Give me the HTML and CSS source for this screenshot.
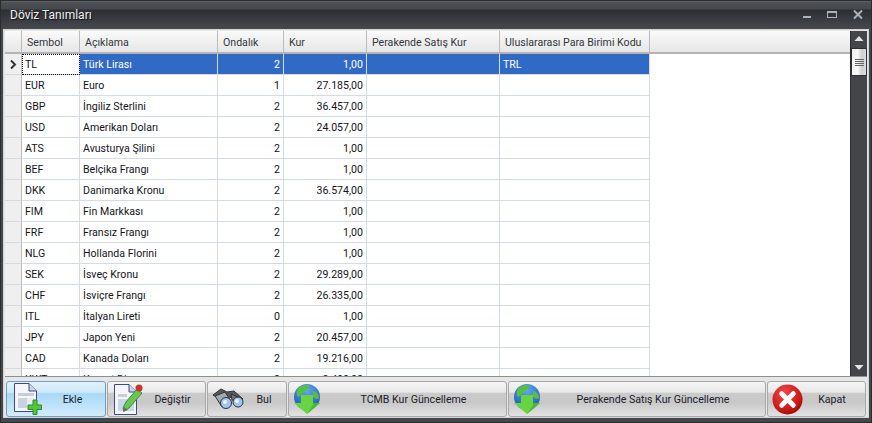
FILE: index.html
```html
<!DOCTYPE html>
<html lang="tr">
<head>
<meta charset="utf-8">
<title>Döviz Tanımları</title>
<link rel="stylesheet" href="styles.css">
</head>
<body>
<div class="window">
  <header class="titlebar">
    <span class="title">Döviz Tanımları</span>
    <div class="winbtns">
      <svg class="wb" width="8" height="10" viewBox="0 0 8 10"><rect x="0" y="6" width="8" height="2" fill="#a9b3bc"/></svg>
      <svg class="wb" width="10" height="10" viewBox="0 0 10 10"><rect x="0.500" y="1.500" width="9" height="6" fill="none" stroke="#a9b3bc"/><rect x="0" y="1" width="10" height="2" fill="#a9b3bc"/></svg>
      <svg class="wb" width="10" height="10" viewBox="0 0 10 10"><path d="M1 0.500 L9 8.500 M9 0.500 L1 8.500" stroke="#a9b3bc" stroke-width="2" fill="none"/></svg>
    </div>
  </header>
  <div class="content">
    <div class="gridwrap">
      <div class="grid">
        <div class="row head">
          <div class="c rh"></div><div class="c sym">Sembol</div><div class="c desc">Açıklama</div><div class="c dec">Ondalık</div><div class="c rate">Kur</div><div class="c ret">Perakende Satış Kur</div><div class="c code">Uluslararası Para Birimi Kodu</div><div class="c fill"></div>
        </div>
        <div class="row selected">
          <div class="c rh"><svg width="7" height="9" viewBox="0 0 7 9"><path d="M1 0.500 L5 4.500 L1 8.500" fill="none" stroke="#333" stroke-width="2"/></svg></div><div class="c sym focus">TL</div><div class="c desc">Türk Lirası</div><div class="c dec num">2</div><div class="c rate num">1,00</div><div class="c ret"></div><div class="c code">TRL</div>
        </div>
        <div class="row"><div class="c rh"></div><div class="c sym">EUR</div><div class="c desc">Euro</div><div class="c dec num">1</div><div class="c rate num">27.185,00</div><div class="c ret"></div><div class="c code"></div></div>
        <div class="row"><div class="c rh"></div><div class="c sym">GBP</div><div class="c desc">İngiliz Sterlini</div><div class="c dec num">2</div><div class="c rate num">36.457,00</div><div class="c ret"></div><div class="c code"></div></div>
        <div class="row"><div class="c rh"></div><div class="c sym">USD</div><div class="c desc">Amerikan Doları</div><div class="c dec num">2</div><div class="c rate num">24.057,00</div><div class="c ret"></div><div class="c code"></div></div>
        <div class="row"><div class="c rh"></div><div class="c sym">ATS</div><div class="c desc">Avusturya Şilini</div><div class="c dec num">2</div><div class="c rate num">1,00</div><div class="c ret"></div><div class="c code"></div></div>
        <div class="row"><div class="c rh"></div><div class="c sym">BEF</div><div class="c desc">Belçika Frangı</div><div class="c dec num">2</div><div class="c rate num">1,00</div><div class="c ret"></div><div class="c code"></div></div>
        <div class="row"><div class="c rh"></div><div class="c sym">DKK</div><div class="c desc">Danimarka Kronu</div><div class="c dec num">2</div><div class="c rate num">36.574,00</div><div class="c ret"></div><div class="c code"></div></div>
        <div class="row"><div class="c rh"></div><div class="c sym">FIM</div><div class="c desc">Fin Markkası</div><div class="c dec num">2</div><div class="c rate num">1,00</div><div class="c ret"></div><div class="c code"></div></div>
        <div class="row"><div class="c rh"></div><div class="c sym">FRF</div><div class="c desc">Fransız Frangı</div><div class="c dec num">2</div><div class="c rate num">1,00</div><div class="c ret"></div><div class="c code"></div></div>
        <div class="row"><div class="c rh"></div><div class="c sym">NLG</div><div class="c desc">Hollanda Florini</div><div class="c dec num">2</div><div class="c rate num">1,00</div><div class="c ret"></div><div class="c code"></div></div>
        <div class="row"><div class="c rh"></div><div class="c sym">SEK</div><div class="c desc">İsveç Kronu</div><div class="c dec num">2</div><div class="c rate num">29.289,00</div><div class="c ret"></div><div class="c code"></div></div>
        <div class="row"><div class="c rh"></div><div class="c sym">CHF</div><div class="c desc">İsviçre Frangı</div><div class="c dec num">2</div><div class="c rate num">26.335,00</div><div class="c ret"></div><div class="c code"></div></div>
        <div class="row"><div class="c rh"></div><div class="c sym">ITL</div><div class="c desc">İtalyan Lireti</div><div class="c dec num">0</div><div class="c rate num">1,00</div><div class="c ret"></div><div class="c code"></div></div>
        <div class="row"><div class="c rh"></div><div class="c sym">JPY</div><div class="c desc">Japon Yeni</div><div class="c dec num">2</div><div class="c rate num">20.457,00</div><div class="c ret"></div><div class="c code"></div></div>
        <div class="row"><div class="c rh"></div><div class="c sym">CAD</div><div class="c desc">Kanada Doları</div><div class="c dec num">2</div><div class="c rate num">19.216,00</div><div class="c ret"></div><div class="c code"></div></div>
        <div class="row"><div class="c rh"></div><div class="c sym">KWT</div><div class="c desc">Kuveyt Dinarı</div><div class="c dec num">2</div><div class="c rate num">8.400,00</div><div class="c ret"></div><div class="c code"></div></div>
      </div>
      <div class="scrollbar">
        <svg class="arrow" width="16" height="17" viewBox="0 0 16 17"><path d="M3.500 10 L8 5 L12.500 10 Z" fill="#e4e4e4"/></svg>
        <div class="track"><div class="thumb"><i></i><i></i><i></i><i></i></div></div>
        <svg class="arrow" width="16" height="17" viewBox="0 0 16 17"><path d="M3.500 6 L8 11 L12.500 6 Z" fill="#e4e4e4"/></svg>
      </div>
    </div>
    <div class="toolbar">
      <button class="btn b-ekle hot">
        <svg class="ico" width="28" height="32" viewBox="0 0 28 32"><path d="M0.500 0.500 H15 L22.500 8 V28.500 H0.500 Z" fill="#f4f6fb" stroke="#3f4a86"/><path d="M15 0.500 V8 H22.500" fill="#cdd3e6" stroke="#3f4a86"/><rect x="4" y="10" width="16" height="3" fill="#c9ced6"/><rect x="4" y="15" width="9" height="10" fill="#c9d3de"/><rect x="13" y="15" width="7" height="10" fill="#e9eef4"/><path d="M14 22 H19 V17 H23 V22 H27.500 V26.500 H23 V31.500 H19 V26.500 H14 Z" fill="#56c43c" stroke="#2f8a27"/></svg>
        <span class="lbl">Ekle</span>
      </button>
      <button class="btn b-deg">
        <svg class="ico" width="29" height="32" viewBox="0 0 29 32"><path d="M0.500 1.500 H15 L22.500 9 V31.500 H0.500 Z" fill="#f4f6fb" stroke="#3f4a86"/><path d="M15 1.500 V9 H22.500" fill="#cdd3e6" stroke="#3f4a86"/><rect x="4" y="11" width="9" height="3" fill="#c9ced6"/><rect x="4" y="16" width="16" height="12" fill="#c3d8ea"/><path d="M9 25 L12 19 L23 6 L28 10 L15 25 L10 28 Z" fill="#6cc653" stroke="#3d8a34"/><path d="M9 29 L10 24 L14 27 Z" fill="#6b6b5c"/><circle cx="25" cy="5" r="3.500" fill="#c8342a"/></svg>
        <span class="lbl">Değiştir</span>
      </button>
      <button class="btn b-bul">
        <svg class="ico" width="32" height="24" viewBox="0 0 32 24"><path d="M1 8 L9 2 L15 5 L22 4 L31 12 L24 12 L17 10 L12 14 Z" fill="#55585c" stroke="#333"/><path d="M3 9 L13 5 L19 14 L10 20 Z" fill="#a4a8ac" stroke="#333"/><path d="M19 7 L30 12 L29 15 L20 13 Z" fill="#74787c" stroke="#333"/><circle cx="14" cy="16" r="5.500" fill="#9fc6f2" stroke="#333"/><circle cx="26" cy="15" r="5" fill="#9fc6f2" stroke="#333"/><circle cx="13" cy="15" r="2" fill="#e9f3fd"/><circle cx="25" cy="14" r="2" fill="#e9f3fd"/></svg>
        <span class="lbl">Bul</span>
      </button>
      <button class="btn b-tcmb">
        <svg class="ico" width="28" height="30" viewBox="0 0 28 30"><defs><radialGradient id="gb" cx="0.500" cy="0.250" r="0.700"><stop offset="0" stop-color="#5fa8f0"/><stop offset="1" stop-color="#1f5fb8"/></radialGradient></defs><circle cx="14" cy="13" r="13" fill="url(#gb)"/><path d="M5 5 C8 1 14 0 17 2 C16 5 13 5 12 8 C9 8 8 12 5 13 C3 11 3 8 5 5 Z M20 7 C23 7 26 10 26 14 C24 16 22 14 20 13 Z" fill="#58c040"/><path d="M8 11 H20 V19 H27 L14 30 L1 19 H8 Z" fill="#68d444"/><path d="M14 30 L27 19 H20 V21 Z" fill="#4fb832"/></svg>
        <span class="lbl">TCMB Kur Güncelleme</span>
      </button>
      <button class="btn b-per">
        <svg class="ico" width="28" height="30" viewBox="0 0 28 30"><circle cx="14" cy="13" r="13" fill="url(#gb)"/><path d="M5 5 C8 1 14 0 17 2 C16 5 13 5 12 8 C9 8 8 12 5 13 C3 11 3 8 5 5 Z M20 7 C23 7 26 10 26 14 C24 16 22 14 20 13 Z" fill="#58c040"/><path d="M8 11 H20 V19 H27 L14 30 L1 19 H8 Z" fill="#68d444"/><path d="M14 30 L27 19 H20 V21 Z" fill="#4fb832"/></svg>
        <span class="lbl">Perakende Satış Kur Güncelleme</span>
      </button>
      <button class="btn b-kap">
        <svg class="ico" width="31" height="31" viewBox="0 0 32 32"><defs><radialGradient id="rg" cx="0.400" cy="0.300" r="0.800"><stop offset="0" stop-color="#f04a4a"/><stop offset="0.700" stop-color="#c91616"/><stop offset="1" stop-color="#7a0a0a"/></radialGradient></defs><circle cx="16" cy="16" r="15.500" fill="url(#rg)"/><path d="M10 10 L22 22 M22 10 L10 22" stroke="#fff" stroke-width="5" stroke-linecap="round"/></svg>
        <span class="lbl">Kapat</span>
      </button>
    </div>
  </div>
</div>
</body>
</html>
```
FILE: styles.css
```css
* { box-sizing: border-box; }
html, body { margin: 0; padding: 0; }
body { width: 872px; height: 423px; overflow: hidden; background: #3a3c40; font-family: Roboto, sans-serif; font-size: 10.600px; }
.window { width: 872px; height: 423px; display: flex; flex-direction: column; background: linear-gradient(#606367 0, #4b4e52 2px, #45484c 8px, #2d2f33 9px, #44474c 27px); border: 1px solid #2b2c2f; overflow: hidden; }
.titlebar { height: 28px; flex: none; display: flex; align-items: center; justify-content: space-between; padding: 0 8px 0 9px; }
.title { color: #eceff2; font-size: 12px; text-shadow: 1px 1px 1px #111; }
.winbtns { display: flex; align-items: center; gap: 16px; }
.wb { display: block; }
.content { margin: 0 2px 4px 2px; flex: 1; min-height: 0; display: flex; flex-direction: column; background: #e6e6e6; border: 1px solid #d4d4d4; padding: 1px 1px 0 1px; }
.gridwrap { height: 346px; flex: none; display: flex; background: #fff; border-bottom: 1px solid #8f8f8f; overflow: hidden; }
.grid { flex: 1; min-width: 0; overflow: hidden; background: #fff; }
.row { display: flex; height: 21px; }
.row.head { height: 23px; background: linear-gradient(#fafafa, #e6e6e6); border-bottom: 2px solid #b4b4b4; }
.c { flex: none; height: 100%; line-height: 20px; padding: 1px 3px 0; color: #14141a; border-right: 1px solid #d3dbe8; border-bottom: 1px solid #d3dbe8; white-space: nowrap; overflow: hidden; }
.head .c { color: #33363c; padding: 2px 3px 0 5px; border-bottom: 0; border-right: 1px solid #bcbcbc; line-height: 20px; }
.rh { width: 17px; background: #efefef; border-right-color: #bdbdbd; border-bottom-color: #d8d8d8; padding: 0; display: flex; align-items: center; justify-content: center; }
.head .rh { background: none; }
.sym { width: 58px; }
.desc { width: 138px; }
.dec { width: 66px; }
.rate { width: 83px; }
.ret { width: 133px; }
.code { width: 150px; }
.head .fill { flex: 1; border-right: 0; }
.num { text-align: right; padding-right: 3px; }
.selected .desc, .selected .dec, .selected .rate, .selected .ret, .selected .code { background: #316ac5; color: #fff; }
.selected .focus { outline: 1px dotted #111; outline-offset: -1px; }
.scrollbar { width: 17px; flex: none; background: #444548; border-left: 1px solid #2b2c2f; display: flex; flex-direction: column; }
.arrow { display: block; flex: none; }
.track { flex: 1; min-height: 0; }
.thumb { height: 28px; background: linear-gradient(90deg, #f3f3f3, #fafafa 40%, #cfcfcf 70%, #dcdcdc); border: 1px solid #2f3033; display: flex; flex-direction: column; align-items: center; justify-content: center; gap: 1px; }
.thumb i { display: block; width: 9px; height: 1px; background: #666; }
.toolbar { flex: 1; min-height: 0; display: flex; gap: 1px; padding: 4px 0 1px 1px; }
.btn { position: relative; flex: none; height: 36px; margin: 0; padding: 0; border: 1px solid #a9a9a9; border-radius: 3px; background: linear-gradient(#f5f5f5 0, #e8e8e8 30%, #cbcbcb 33%, #c8c8c8 60%, #e2e2e2 100%); font: inherit; color: #20202a; display: flex; align-items: center; overflow: hidden; }
.btn.hot { background: linear-gradient(#e2f2fc 0, #cfe9fa 30%, #a9d8f6 34%, #bfe3fa 70%, #d2edfc 100%); border-color: #6f9fc5; }
.ico { flex: none; display: block; margin-left: 4px; }
.lbl { flex: 1; text-align: center; white-space: nowrap; }
.b-ekle .ico { margin-left: 7px; }
.b-deg .ico { margin-left: 6px; }
.b-ekle .lbl { padding-right: 2px; }
.b-deg .lbl { padding-right: 3px; }
.b-bul .lbl { padding-right: 2px; }
.b-kap .lbl { padding-right: 4px; }
.b-ekle { width: 100px; }
.b-deg { width: 99px; }
.b-bul { width: 80px; }
.b-tcmb { width: 219px; }
.b-per { width: 258px; }
.b-kap { width: 99px; }
```
